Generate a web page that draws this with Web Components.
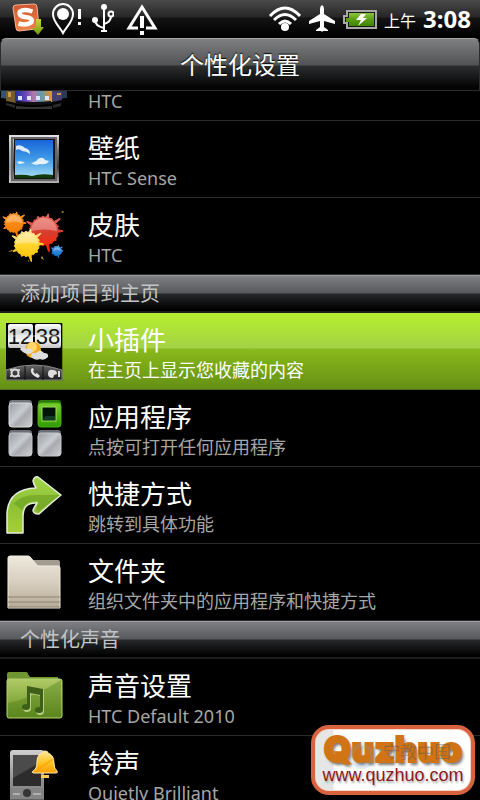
<!DOCTYPE html>
<html lang="zh-CN">
<head>
<meta charset="utf-8">
<meta name="viewport" content="width=device-width, initial-scale=1">
<title>个性化设置</title>
<style>
    html, body{
        height: 100%;
        margin: 0;
        background: #000;
    }
    body{
        font-family: "Noto Sans", "Noto Sans CJK SC", sans-serif;
        color: #fff;
    }
</style>
</head>
<body>
<personalize-screen></personalize-screen>

<script>
class statusBar extends HTMLElement {

    constructor(){
        super();
        this.attachShadow({mode: "open"});
    }

    getStyle(){
        return `
            :host{
                display: flex;
                align-items: center;
                justify-content: space-between;
                height: 38px;
                padding: 0 9px 0 12px;
                box-sizing: border-box;
                background: linear-gradient(#4a4a4a, #262626 17px, #141414 18px, #000 36px);
            }
            svg{
                display: block;
                flex: none;
            }
            div{
                display: flex;
                align-items: center;
                gap: 8px;
            }
            .right{
                gap: 7px;
            }
            .ampm{
                font-size: 16px;
                line-height: 38px;
                padding-top: 4px;
            }
            time{
                font-size: 24px;
                font-weight: 700;
                line-height: 38px;
            }
        `
    }

    connectedCallback(){
        this.shadowRoot.innerHTML = `
            <style>${this.getStyle()}</style>
            <div class="left">
                <svg width="32" height="34" viewBox="0 0 32 34">
                    <defs>
                        <linearGradient id="so" x1="0" y1="0" x2="0" y2="1"><stop offset="0" stop-color="#d0562f"/><stop offset="1" stop-color="#f08448"/></linearGradient>
                        <linearGradient id="sg" x1="0" y1="0" x2="0" y2="1"><stop offset="0" stop-color="#c6d63a"/><stop offset="1" stop-color="#6f9a10"/></linearGradient>
                    </defs>
                    <path d="M4 3 L22 2 Q25 2 25 5 L27 24 Q27 27 24 27 L7 29 Q4 29 4 26 L1 6 Q1 3 4 3Z" fill="url(#so)" stroke="#f4b29a" stroke-width="1"/>
                    <path d="M20.500 9.500 Q12 6.500 8 9.500 Q6 14 13 15 Q21 15.500 19.500 20 Q15 24 6.500 21.500" fill="none" stroke="#fff" stroke-width="4.500"/>
                    <path d="M24 17h5v8h3l-6 8-6-7h4z" fill="url(#sg)"/>
                </svg>
                <svg width="31" height="34" viewBox="0 0 31 34">
                    <path d="M11 31 C8 25 1 20 1 12 A10 10 0 0 1 21 12 C21 20 14 25 11 31Z" fill="none" stroke="#fff" stroke-width="2"/>
                    <circle cx="11" cy="12" r="6" fill="#fff"/>
                    <path d="M26 7h3v10h-3zM26 20h3v3h-3z" fill="#fff"/>
                </svg>
                <svg width="23" height="34" viewBox="0 0 23 34" fill="none" stroke="#fff" stroke-width="2">
                    <path d="M13 5v25M4 18q0 6 9 8M20 14q0 6-7 8M10 29h6"/>
                    <circle cx="13" cy="5" r="3" fill="#fff" stroke="none"/>
                    <circle cx="4" cy="18" r="3" fill="#fff" stroke="none"/>
                    <circle cx="20" cy="12" r="2.500"/>
                </svg>
                <svg width="40" height="34" viewBox="0 0 40 34">
                    <path d="M20 5 L33 26 H7Z" fill="none" stroke="#fff" stroke-width="3"/>
                    <path d="M16 23h8v6h-8z" fill="#0a0a0a"/>
                    <path d="M18 14h4v12h-4zM18 29h4v4h-4z" fill="#fff"/>
                </svg>
            </div>
            <div class="right">
                <svg width="34" height="30" viewBox="0 0 34 30" fill="none" stroke="#fff" stroke-width="3">
                    <path d="M3 12Q18-4 33 12M7 16q11-11 22 0M12 20q6-6 12 0"/>
                    <circle cx="18" cy="23" r="4" fill="#fff" stroke="none"/>
                </svg>
                <svg width="28" height="30" viewBox="0 0 28 30">
                    <path d="M14 1q2 1 2 4v5l11 7v3l-11-3v6l4 3v1h-5l-1 1-1-1H8v-1l4-3v-6L1 20v-3l11-7V5q0-3 2-4z" fill="#fff"/>
                </svg>
                <svg width="34" height="30" viewBox="0 0 34 30">
                    <defs><linearGradient id="bt" x1="0" y1="0" x2="0" y2="1"><stop offset="0" stop-color="#8cc63c"/><stop offset=".5" stop-color="#5c9c14"/><stop offset="1" stop-color="#3d8500"/></linearGradient></defs>
                    <path d="M4 7h29v17H4v-5H1v-7h3z" fill="#191919" stroke="#a9a9a9" stroke-width="2"/>
                    <path d="M6 9h25v13H6v-4H3v-4h3z" fill="url(#bt)"/>
                    <path d="M18 10h5l-3 4h4l-9 8 3-6h-5z" fill="#fff"/>
                </svg>
                <span class="ampm">上午</span>
                <time>3:08</time>
            </div>
        `;
    }

}

class titleBar extends HTMLElement {

    constructor(){
        super();
        this.attachShadow({mode: "open"});
    }

    connectedCallback(){
        this.shadowRoot.innerHTML = `
            <style>
                :host{
                    display: block;
                    height: 53px;
                    box-sizing: border-box;
                    border: 1px solid #2c2c2c;
                    border-top: 1px solid #a5a5a5;
                    border-radius: 6px 6px 0 0;
                    background: linear-gradient(#7e8082, #505254 26px, #2b2d2f 27px, #080808 46px, #000);
                }
                h1{
                    margin: 0;
                    font-size: 24px;
                    font-weight: 400;
                    line-height: 51px;
                    text-align: center;
                    text-shadow: 0 -1px 1px #000;
                }
            </style>
            <h1><slot></slot></h1>
        `;
    }

}

class sectionHeader extends HTMLElement {

    constructor(){
        super();
        this.attachShadow({mode: "open"});
    }

    connectedCallback(){
        this.shadowRoot.innerHTML = `
            <style>
                :host{
                    display: block;
                    height: 38px;
                    box-sizing: border-box;
                    padding: 0 20px;
                    border-top: 1px solid #a09fa0;
                    border-bottom: 2px solid #1c1c1c;
                    background: linear-gradient(#7d7f83, #57595c 17px, #26282a 18px, #000 34px);
                }
                h2{
                    margin: 0;
                    font-size: 20px;
                    font-weight: 400;
                    line-height: 35px;
                    color: #c4c4c4;
                }
            </style>
            <h2><slot></slot></h2>
        `;
    }

}

class settingRow extends HTMLElement {

    constructor(){
        super();
        this.attachShadow({mode: "open"});
    }

    getStyle(){
        return `
            :host{
                display: block;
            }
            button{
                display: flex;
                align-items: center;
                gap: 16px;
                width: 100%;
                height: 77px;
                margin: 0;
                padding: 0;
                border: 0;
                border-bottom: 1px solid #2b2b2b;
                background: none;
                color: #fff;
                font: inherit;
                text-align: left;
                cursor: pointer;
            }
            .texts{
                display: flex;
                flex-direction: column;
                min-width: 0;
                padding-top: 4px;
                white-space: nowrap;
            }
            .label{
                font-size: 26px;
                line-height: 34px;
            }
            .detail{
                font-size: 18px;
                line-height: 26px;
                color: #a6a6a6;
            }
            :host([selected]) button{
                border-bottom-color: #526f1c;
                background: linear-gradient(#b4ee2f, #b0e733 10px, #a3d147 35px, #89b91a 36px, #659016);
            }
            :host([selected]) .detail{
                color: #fff;
            }
        `
    }

    connectedCallback(){
        this.shadowRoot.innerHTML = `
            <style>${this.getStyle()}</style>
            <button type="button">
                <slot name="icon"></slot>
                <span class="texts">
                    <span class="label">${this.getAttribute("label")}</span>
                    <span class="detail">${this.getAttribute("detail")}</span>
                </span>
            </button>
        `;
    }

}

class siteBadge extends HTMLElement {

    constructor(){
        super();
        this.attachShadow({mode: "open"});
    }

    connectedCallback(){
        this.shadowRoot.innerHTML = `
            <style>
                a{
                    display: block;
                    position: relative;
                    box-sizing: border-box;
                    width: 164px;
                    height: 70px;
                    padding-top: 5px;
                    border: 4px solid #d9623f;
                    border-radius: 18px;
                    background: linear-gradient(90deg, #e6e6e6 18px, #fff 19px);
                    box-shadow: inset 0 0 0 1px #f5d5ca;
                    text-align: center;
                    text-decoration: none;
                }
                span{
                    display: block;
                }
                .name{
                    font: 900 35px/30px Inter, sans-serif;
                    color: #d07415;
                    -webkit-text-stroke: 2px #d07415;
                    text-shadow: 2px 3px 3px #777;
                }
                .url{
                    font: 18px/22px "Liberation Sans", sans-serif;
                    color: #8c1a22;
                    text-shadow: 1px 2px 2px #aaa;
                }
                .stamp{
                    position: absolute;
                    right: 20px;
                    top: 10px;
                    font: 17px/24px "Noto Sans CJK SC", sans-serif;
                    color: #555;
                    opacity: .4;
                }
                .stamp::before{
                    content: "";
                    position: absolute;
                    right: 76px;
                    top: 4px;
                    width: 16px;
                    height: 16px;
                    border: 5px solid #6d9bd0;
                    border-radius: 50%;
                    opacity: .5;
                }
            </style>
            <a href="#"><span class="name">Quzhuo</span><span class="url">www.quzhuo.com</span><span class="stamp">守教中国</span></a>
        `;
    }

}

// paint blob: a ring of uneven spikes around a disc
function splat(cx, cy, r, fill){
    const reach = [1.35, 1.05, 1.1, 1.04, 1.5, 1.06, 1.12, 1.03, 1.3, 1.08, 1.05, 1.4, 1.04, 1.12, 1.06, 1.25, 1.05, 1.45, 1.08];
    let d = "";
    reach.forEach((k, i) => {
        const a = i * Math.PI * 2 / reach.length;
        const p = (ang, rad) => (cx + Math.cos(ang) * rad).toFixed(1) + " " + (cy + Math.sin(ang) * rad).toFixed(1);
        d += (i ? "L" : "M") + p(a - .09, r) + "L" + p(a - .01, r * k) + "L" + p(a + .02, r * k) + "L" + p(a + .09, r);
    });
    return `<path d="${d}Z" fill="${fill}" stroke="${fill}" stroke-width="1" stroke-linejoin="round"/>
        <path d="M${cx - r + 1} ${cy} A${r - 1} ${r - 1} 0 0 1 ${cx + r - 1} ${cy} Q${cx} ${cy - 3} ${cx - r + 1} ${cy}Z" fill="#fff" opacity=".3"/>`;
}

function icon(content){
    return `<svg slot="icon" width="72" height="76" viewBox="0 0 72 76" aria-hidden="true">${content}</svg>`;
}

function grad(id, ...colors){
    const stops = colors.map((c, i) => `<stop offset="${i / (colors.length - 1)}" stop-color="${c}"/>`).join("");
    return `<linearGradient id="${id}" x1="0" y1="0" x2="0" y2="1">${stops}</linearGradient>`;
}

const icons = {
    scene: icon(`
        <defs><linearGradient id="sc"><stop offset="0" stop-color="#20309c"/><stop offset=".3" stop-color="#6a48b8"/><stop offset=".5" stop-color="#b678a8"/><stop offset=".7" stop-color="#5f9ab0"/><stop offset="1" stop-color="#f0921c"/></linearGradient></defs>
        <path d="M1 20h8v35l-8-1z" fill="#35536e"/><path d="M6 20h10v39l-10-2z" fill="#7a5a26"/>
        <path d="M56 20h11v34l-11 1z" fill="#2a3b52"/><path d="M52 20h10v36l-10 2z" fill="#45406e"/>
        <path d="M8 48h3v5H8zM57 49h4v2h-4z" fill="#c59a48"/>
        <path d="M15 16h37v42q-18 3-37 0z" fill="url(#sc)"/>
        <path d="M16 57q17 2 35 0v3q-17 2-35 0z" fill="#101018"/>
        <path d="M18 52h4v4h-4zM27 52h4v4h-4zM36 52h4v4h-4zM45 52h4v4h-4z" fill="#dde4ff"/>
        <path d="M16 62q18 2 36 0v3H16z" fill="#666" opacity=".5"/>
        <path d="M6 59l9 2v3l-9-3zM53 61l8-2v3l-8 2z" fill="#555" opacity=".5"/>`),

    wallpaper: icon(`
        <defs>${grad("wf", "#e8e8e8", "#777", "#3a3a3a", "#b5b5b5")}${grad("ws", "#1764d8", "#3f9be8", "#a9def5")}</defs>
        <rect x="9" y="14" width="50" height="48" fill="url(#wf)"/>
        <path d="M9 14h50l-3 3H12v42l-3 3z" fill="#ddd" opacity=".6"/>
        <rect x="12" y="17" width="44" height="42" fill="none" stroke="#666" stroke-width="2"/>
        <rect x="14" y="18" width="41" height="40" fill="#151515"/>
        <rect x="15" y="19" width="38" height="38" fill="url(#ws)"/>
        <path d="M16 25q5-2 9 2 5 1 5 6-4-3-8-3-3-3-6-1zM31 42q5-1 7-4 5-3 7 1l4 1q-2 4-9 3-5 2-9-1zM17 41q4-2 8 1l-6 1z" fill="#fff" opacity=".85"/>
        <path d="M15 54q9-1 17 1 9-3 21-1v3H15z" fill="#143a0b"/>`),

    skin: icon(`
        <defs>${grad("s1", "#ff9a28", "#f07800")}${grad("s2", "#e86b60", "#d83b2e", "#ff2500")}${grad("s3", "#ffe9a0", "#ffd52c", "#ffbd00")}${grad("s4", "#58a5e8", "#0869c8")}</defs>
        ${splat(14, 25, 9, "url(#s1)")}${splat(44, 33, 14, "url(#s2)")}${splat(27, 46, 12, "url(#s3)")}${splat(57, 53, 4.5, "url(#s4)")}
        <path d="M8 54l4-2 1 1zM42 58l2 4-3-2zM61 14l3-1-1 2zM28 62l1 1-1 1z" fill="#dcb12b"/>`),

    widget: icon(`
        <defs>${grad("wc", "#fff", "#cfd1d4", "#f5f5f5", "#c5c5c5")}${grad("wb", "#666", "#1b1b1b")}</defs>
        <rect x="6" y="10" width="57" height="58" rx="1" fill="#395800" opacity=".5"/>
        <rect x="6" y="10" width="56" height="57" fill="#050505"/>
        <rect x="8" y="11" width="25" height="24" rx="2" fill="url(#wc)"/><rect x="35" y="11" width="26" height="24" rx="2" fill="url(#wc)"/>
        <g font-family="Liberation Sans Narrow, Liberation Sans, sans-serif" font-size="22" fill="#111" text-anchor="middle"><text x="20" y="31">12</text><text x="48" y="31">38</text></g>
        <path d="M8 23h53" stroke="#fff" opacity=".6"/>
        <circle cx="33" cy="37" r="8" fill="#f6a61c"/><circle cx="32" cy="34" r="5" fill="#ffd668"/>
        <path d="M20 36q3-4 7 0 4-2 6 3l-3 2q-7 0-10-5zM31 44q0-5 5-4 4-5 8 0 5 0 4 4-4 4-8 2-5 2-9-2z" fill="#ddd"/>
        <path d="M6 57q28-10 56 0v10H6z" fill="url(#wb)" stroke="#888" stroke-width="1"/>
        <path d="M25 53v14M43 53v14" stroke="#111"/>
        <circle cx="15" cy="60" r="3.500" fill="none" stroke="#ddd" stroke-width="2"/><path d="M10 57h2M18 57h2M10 63h2M18 63h2" stroke="#ccc" stroke-width="2"/>
        <path d="M31 56q-1 6 7 9l2-2-3-3-2 1-2-3 1-1-1-2z" fill="#e2e2e2"/>
        <path d="M48 61q0-5 5-4 4 0 4 4l-3 1-1 3q-5 0-5-4zM58 58h2v6h-2z" fill="#ddd"/>`),

    apps: icon(`
        <defs><linearGradient id="tile" x1="0" y1="0" x2="1" y2="1"><stop offset="0" stop-color="#999ca1"/><stop offset=".45" stop-color="#c9ccd0"/><stop offset=".6" stop-color="#a8aaaf"/><stop offset="1" stop-color="#d0d1d4"/></linearGradient>${grad("gt", "#7ace31", "#2e9c00")}</defs>
        <rect x="9" y="10" width="23" height="27" rx="3" fill="#73767c"/><rect x="9" y="13" width="23" height="24" rx="3" fill="url(#tile)" stroke="#d9dbdf"/>
        <rect x="9" y="40" width="23" height="26" rx="3" fill="#6b6e76"/><rect x="9" y="43" width="23" height="23" rx="3" fill="url(#tile)" stroke="#c4c6cc"/>
        <rect x="38" y="40" width="23" height="26" rx="3" fill="#6b6e76"/><rect x="38" y="43" width="23" height="23" rx="3" fill="url(#tile)" stroke="#c4c6cc"/>
        <rect x="38" y="10" width="23" height="27" rx="3" fill="#2f7a0d"/><rect x="38" y="13" width="23" height="24" rx="3" fill="url(#gt)" stroke="#49ae12"/>
        <rect x="42" y="17" width="14" height="14" fill="#001507" stroke="#9de15b" stroke-width="1"/><path d="M43 28l3-2h9v4H43z" fill="#123c25"/>`),

    shortcut: icon(`
        <defs>${grad("ar", "#a4d64b", "#8cc035", "#a6cf38")}</defs>
        <path d="M7 66V47Q8 22 36 21 34 18 33 14 34 9 38 10L61 28 Q50 37 39 47 33 47 33 43 35 39 37 36 23 35 23 49V66Z" fill="url(#ar)" stroke="#e4edda" stroke-width="1.500" stroke-linejoin="round"/>
        <path d="M13 37Q21 28 36 28L60 28Q49 36 38 45 35 43 39 34 25 33 22 43 17 38 13 37Z" fill="#64951a" opacity=".5"/>`),

    folder: icon(`
        <defs>${grad("fo", "#eee9dd", "#d7cebe", "#b7aa95")}</defs>
        <path d="M32 16h26q2 0 2 2v15H32z" fill="#a39c90"/>
        <path d="M8 64V14q0-2 2-2h18q2 0 3 2l5 6q1 2 3 2h19q2 0 2 2v40z" fill="url(#fo)" stroke="#f2ece1" stroke-width="1"/>
        <path d="M8 53h52M8 58h52M8 63h52" stroke="#8b8373"/>`),

    sounds: icon(`
        <defs>${grad("mf", "#b0cb68", "#8bad43", "#638f25")}</defs>
        <path d="M7 28V15q0-2 2-2h17q2 0 2 2l2 3h28v10z" fill="#6f9630"/>
        <rect x="7" y="20" width="55" height="39" rx="2" fill="url(#mf)" stroke="#b0d06b" stroke-width="1"/>
        <path d="M8 44Q33 39 61 21V58H8z" fill="#46750f" opacity=".35"/>
        <g fill="#b5cf7e"><path d="M28 28l16 3v21h-3V37l-10-2v14h-3z"/><ellipse cx="27" cy="49" rx="4" ry="4"/><ellipse cx="40" cy="52" rx="4" ry="4"/></g>
        <g fill="#3d5f18"><path d="M27 27l16 3v21h-3V36l-10-2v14h-3z"/><ellipse cx="26" cy="48" rx="4" ry="3"/><ellipse cx="39" cy="51" rx="4" ry="3"/></g>`),

    ringtone: icon(`
        <defs>${grad("ph", "#cfcfcf", "#8f8f8f", "#777")}${grad("be", "#ffe79a", "#ffc62c", "#ff9e00")}</defs>
        <path d="M10 76V17q0-3 3-3h28q3 0 3 3v59z" fill="url(#ph)"/>
        <rect x="13" y="19" width="28" height="31" fill="#2c2c2c"/><path d="M13 42L41 26V19H13z" fill="#585858" opacity=".7"/>
        <path d="M10 52h34v11H10z" fill="#848484"/><circle cx="27" cy="57" r="4" fill="#353535"/><path d="M13 58h7M33 58h8" stroke="#dcdcdc"/>
        <path d="M10 64h34" stroke="#444"/>
        <path d="M45 15q3 0 3 2 6 2 6 10 0 6 3 8 1 2-1 2H34q-3 0-1-2 4-2 4-9 0-7 5-9 0-2 3-2z" fill="url(#be)" stroke="#ffe9ae" stroke-width="1"/>
        <path d="M38 33q8-5 15-10" stroke="#ff9f00" fill="none" stroke-width="2" opacity=".6"/>
        <path d="M41 39h8v3h-8z" fill="#ffc952"/>`)
};

class personalizeScreen extends HTMLElement {

    constructor(){
        super();
        this.attachShadow({mode: "open"});
    }

    getStyle(){
        return `
            :host{
                display: flex;
                flex-direction: column;
                position: relative;
                height: 100vh;
                overflow: hidden;
            }
            status-bar, title-bar{
                flex: none;
            }
            main{
                flex: 1;
                min-height: 0;
                overflow-y: auto;
                scrollbar-width: none;
            }
            svg{
                display: block;
                flex: none;
            }
            site-badge{
                position: absolute;
                right: 5px;
                bottom: 5px;
            }
        `
    }

    connectedCallback(){
        this.shadowRoot.innerHTML = `
            <style>${this.getStyle()}</style>
            <status-bar></status-bar>
            <title-bar>个性化设置</title-bar>
            <main>
                <setting-row label="场景" detail="HTC">${icons.scene}</setting-row>
                <setting-row label="壁纸" detail="HTC Sense">${icons.wallpaper}</setting-row>
                <setting-row label="皮肤" detail="HTC">${icons.skin}</setting-row>
                <section-header>添加项目到主页</section-header>
                <setting-row selected label="小插件" detail="在主页上显示您收藏的内容">${icons.widget}</setting-row>
                <setting-row label="应用程序" detail="点按可打开任何应用程序">${icons.apps}</setting-row>
                <setting-row label="快捷方式" detail="跳转到具体功能">${icons.shortcut}</setting-row>
                <setting-row label="文件夹" detail="组织文件夹中的应用程序和快捷方式">${icons.folder}</setting-row>
                <section-header>个性化声音</section-header>
                <setting-row label="声音设置" detail="HTC Default 2010">${icons.sounds}</setting-row>
                <setting-row label="铃声" detail="Quietly Brilliant">${icons.ringtone}</setting-row>
            </main>
            <site-badge></site-badge>
        `;
        // the list opens part way down its first row
        this.shadowRoot.querySelector("main").scrollTop = 47;
    }

}

customElements.define("status-bar", statusBar);
customElements.define("title-bar", titleBar);
customElements.define("section-header", sectionHeader);
customElements.define("setting-row", settingRow);
customElements.define("site-badge", siteBadge);
customElements.define("personalize-screen", personalizeScreen);
</script>
</body>
</html>
